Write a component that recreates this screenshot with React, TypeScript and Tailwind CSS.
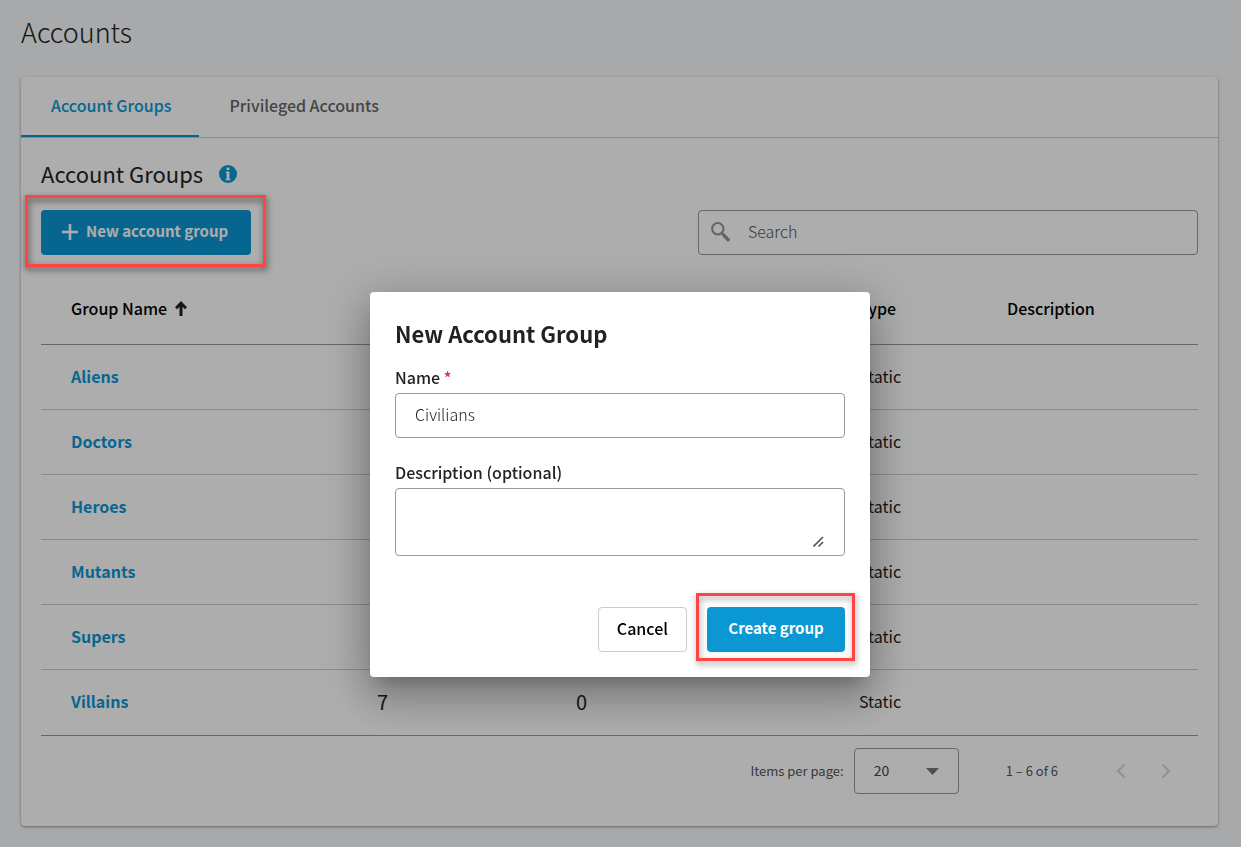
import React, { useState } from 'react'

type Group = { name: string; accounts: number; policies: number; type: string; description: string }

const groups: Group[] = [
  { name: 'Aliens', accounts: 4, policies: 0, type: 'Static', description: '' },
  { name: 'Doctors', accounts: 3, policies: 0, type: 'Static', description: '' },
  { name: 'Heroes', accounts: 6, policies: 0, type: 'Static', description: '' },
  { name: 'Mutants', accounts: 5, policies: 0, type: 'Static', description: '' },
  { name: 'Supers', accounts: 2, policies: 0, type: 'Static', description: '' },
  { name: 'Villains', accounts: 7, policies: 0, type: 'Static', description: '' },
]

function Tabs() {
  return (
    <div role="tablist" className="flex h-[61px] border-b border-[#ccc]">
      <button
        role="tab"
        aria-selected="true"
        className="h-[60px] border-b-2 border-[#0b97d4] pr-7 pb-[2px] pl-[30px] text-base font-medium text-[#0b97d4]"
      >
        Account Groups
      </button>
      <button
        role="tab"
        aria-selected="false"
        className="h-[60px] border-b-2 border-transparent pr-7 pb-[2px] pl-[30px] text-base font-medium text-[#666]"
      >
        Privileged Accounts
      </button>
    </div>
  )
}

function Toolbar() {
  return (
    <div className="flex items-center justify-between gap-6">
      <div className="relative shrink-0">
        <button className="flex h-[45px] min-w-[210px] items-center gap-2 rounded bg-[#0b97d4] px-[21px] pb-[2px] text-[15px] font-bold text-white">
          <svg width="16" height="16" viewBox="0 0 16 16" fill="none" stroke="currentColor" strokeWidth="2.5">
            <path d="M8 0v16M0 8h16" />
          </svg>
          New account group
        </button>
        <span className="pointer-events-none absolute -top-[15px] -right-[15px] -bottom-3 -left-4 z-50 border-3 border-[#ff4444] drop-shadow-[1px_3px_3px_rgba(0,0,0,0.6)]" />
      </div>
      <label className="flex h-[45px] w-[500px] items-center rounded border border-[#999] pl-3">
        <svg className="shrink-0" width="20" height="22" viewBox="0 0 20 22" fill="none" stroke="#8c9494">
          <circle cx="6.8" cy="6.8" r="5.7" strokeWidth="2" />
          <path d="M10.8 11l2.2 2.2" strokeWidth="2.2" />
          <path d="M12 12.3l6.2 6.6" strokeWidth="3.4" />
        </svg>
        <input
          type="search"
          aria-label="Search"
          placeholder="Search"
          className="min-w-0 flex-1 px-[17px] pb-1 text-base font-light outline-none placeholder:text-[#555]"
        />
      </label>
    </div>
  )
}

function GroupsTable() {
  return (
    <table className="mt-[18px] w-full table-fixed border-collapse text-left text-base text-[#222]">
      <colgroup>
        <col className="w-[306px]" />
        <col className="w-[199px]" />
        <col className="w-[283px]" />
        <col className="w-[148px]" />
        <col className="w-[221px]" />
      </colgroup>
      <thead>
        <tr className="h-[71px] border-b border-[#999] text-black">
          <th className="pl-[30px] font-medium" aria-sort="ascending">
            <span className="flex items-center gap-2">
              Group Name
              <svg width="12" height="15" viewBox="0 0 12 15" fill="none" stroke="#222" strokeWidth="3">
                <path d="M6 15V2.5M1 7.3L6 2.2L11 7.3" />
              </svg>
            </span>
          </th>
          <th className="pl-[30px] font-medium" aria-label="Accounts" />
          <th className="pl-[30px] font-medium" aria-label="Policies" />
          <th className="pl-[30px] font-medium">Type</th>
          <th className="pl-[30px] font-medium">Description</th>
        </tr>
      </thead>
      <tbody>
        {groups.map((group) => (
          <tr key={group.name} className="h-[65px] border-b border-[#ccc] last:h-[66px] last:border-[#999]">
            <td className="pb-[2px] pl-[30px]">
              <a href="#" className="font-bold text-[#0b97d4]">
                {group.name}
              </a>
            </td>
            <td className="pl-[30px] text-xl">{group.accounts}</td>
            <td className="pl-[30px] text-xl">{group.policies}</td>
            <td className="pb-[2px] pl-[30px]">{group.type}</td>
            <td className="pb-[2px] pl-[30px]">{group.description}</td>
          </tr>
        ))}
      </tbody>
    </table>
  )
}

function Paginator() {
  return (
    <div className="flex items-center justify-end pt-3 pr-[22px] pb-8 text-[13px] text-[#555]">
      <label htmlFor="page-size" className="mr-[10px]">
        Items per page:
      </label>
      <div className="relative">
        <select
          id="page-size"
          defaultValue="20"
          className="block h-[46px] w-[105px] appearance-none rounded border border-[#999] pb-[2px] pl-[19px] text-sm text-[#444]"
        >
          <option>10</option>
          <option>20</option>
          <option>50</option>
        </select>
        <svg className="pointer-events-none absolute top-5 right-5" width="13" height="7" viewBox="0 0 13 7" fill="#757575">
          <path d="M0 0h13L6.5 7z" />
        </svg>
      </div>
      <span className="ml-[47px]">1 – 6 of 6</span>
      <div className="ml-[53px] flex gap-[25px]">
        <button aria-label="Previous page" disabled className="flex h-5 w-5 items-center justify-center">
          <svg width="10" height="16" viewBox="0 0 10 16" fill="none" stroke="#d8d8d8" strokeWidth="2.2">
            <path d="M8.5 1.5L2 8l6.5 6.5" />
          </svg>
        </button>
        <button aria-label="Next page" disabled className="flex h-5 w-5 items-center justify-center">
          <svg width="10" height="16" viewBox="0 0 10 16" fill="none" stroke="#d8d8d8" strokeWidth="2.2">
            <path d="M1.5 1.5L8 8l-6.5 6.5" />
          </svg>
        </button>
      </div>
    </div>
  )
}

function NewGroupDialog() {
  const [name, setName] = useState('Civilians')
  const [description, setDescription] = useState('')

  return (
    <div className="fixed inset-0 z-40 flex items-start justify-center bg-black/32 pt-[292px] pr-px">
      <form
        role="dialog"
        aria-labelledby="dialog-title"
        onSubmit={(e) => e.preventDefault()}
        className="w-[500px] rounded bg-white p-[25px] text-base text-[#222] shadow-[0_11px_15px_-7px_rgba(0,0,0,0.2),0_24px_38px_3px_rgba(0,0,0,0.14),0_9px_46px_8px_rgba(0,0,0,0.2)]"
      >
        <h2 id="dialog-title" className="text-[22px] leading-8 font-bold">
          New Account Group
        </h2>

        <label htmlFor="group-name" className="mt-4 block leading-6 font-medium">
          Name <span className="text-[#dc2846]">*</span>
        </label>
        <input
          id="group-name"
          value={name}
          onChange={(e) => setName(e.target.value)}
          className="mt-1 block h-[45px] w-full rounded border border-[#999] px-[19px] pb-1 font-light outline-none"
        />

        <label htmlFor="group-description" className="mt-[22px] block leading-6 font-medium">
          Description (optional)
        </label>
        <div className="relative mt-1 rounded border border-[#999] px-[19px] py-[7px]">
          <textarea
            id="group-description"
            value={description}
            onChange={(e) => setDescription(e.target.value)}
            className="block h-[52px] w-full resize-y outline-none [&::-webkit-resizer]:hidden"
          />
          <svg
            className="pointer-events-none absolute right-5 bottom-2"
            width="11"
            height="11"
            viewBox="0 0 11 11"
            fill="none"
            stroke="#555"
            strokeWidth="1.6"
          >
            <path d="M0.5 10.5L10 1M5.5 10.5L10 6" />
          </svg>
        </div>

        <div className="mt-[51px] flex justify-end gap-5">
          <button type="button" className="h-[45px] rounded border border-[#ccc] px-[18px] pb-1 font-medium text-black">
            Cancel
          </button>
          <div className="relative">
            <button type="submit" className="h-[45px] min-w-[138px] rounded bg-[#0b97d4] px-5 pb-[2px] text-[15px] font-bold text-white">
              Create group
            </button>
            <span className="pointer-events-none absolute -top-[14px] -right-[10px] -bottom-[9px] -left-[11px] border-3 border-[#ff4444] drop-shadow-[1px_3px_3px_rgba(0,0,0,0.4)]" />
          </div>
        </div>
      </form>
    </div>
  )
}

export default function App() {
  return (
    <div className="min-h-screen bg-[#f7fafc] pr-[23px] pb-5 pl-[21px] font-['Noto_Sans_CJK_SC',sans-serif] text-[#222]">
      <h1 className="pt-3 pb-[25px] text-[27px] leading-10 font-extralight">Accounts</h1>

      <main className="rounded bg-white shadow-[0_1px_3px_rgba(0,0,0,0.4)]">
        <Tabs />
        <div className="px-5 pt-5">
          <h2 className="mb-[22px] flex items-center gap-4 text-[22px] leading-[30px]">
            Account Groups
            <svg className="mt-[2px]" width="18" height="18" viewBox="0 0 18 18">
              <circle cx="9" cy="9" r="9" fill="#0b97d4" />
              <path d="M7.6 2.6h2.8V5H7.6zM6.8 6.5h3.6v7.2h1v1.6H6.6v-1.6h1V8.1h-.8z" fill="#fff" />
            </svg>
          </h2>
          <Toolbar />
          <GroupsTable />
          <Paginator />
        </div>
      </main>

      <NewGroupDialog />
    </div>
  )
}
